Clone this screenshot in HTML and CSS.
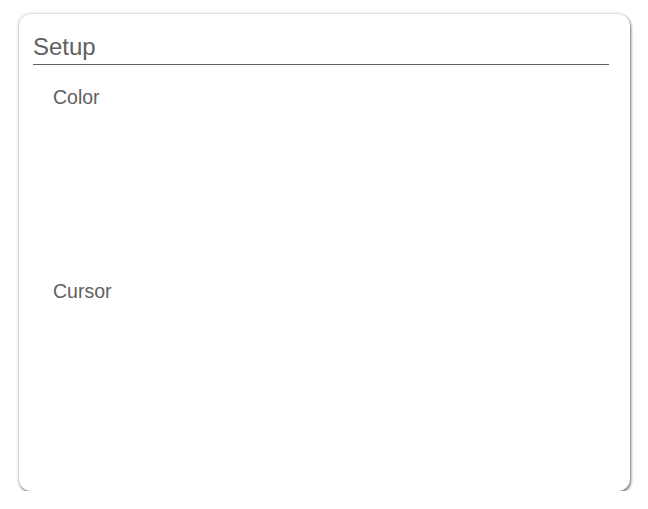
FILE: index.html
```html
<!DOCTYPE html>
<html>
<head>
<meta charset="utf-8">
<link rel="stylesheet" href="styles.css">
</head>
<body>
<div class="card">
  <h1 class="title">Setup</h1>
  <div class="section">
    <div class="label">Color</div>
  </div>
  <div class="section">
    <div class="label">Cursor</div>
  </div>
</div>
</body>
</html>
```
FILE: styles.css
```css
html, body {
  margin: 0;
  padding: 0;
  background: #fff;
}
body {
  padding: 14px 0 0 19px;
  font-family: "Liberation Sans", Arial, sans-serif;
  color: #606060;
}
.card {
  box-sizing: border-box;
  width: 611px;
  height: 477px;
  border-radius: 12px;
  background: #fff;
  box-shadow: 0 0 3px rgba(0,0,0,0.3), 1px 2px 3px rgba(0,0,0,0.45);
  padding: 19px 21px 0 14px;
}
.title {
  margin: 0;
  font-size: 24px;
  font-weight: normal;
  line-height: 27px;
  padding-bottom: 4px;
  border-bottom: 1px solid #606060;
  color: #606060;
}
.section {
  height: 194px;
  padding-left: 20px;
}
.section:first-of-type {
  margin-top: 21px;
}
.label {
  font-size: 19.5px;
  line-height: 22px;
  color: #606060;
}
```
